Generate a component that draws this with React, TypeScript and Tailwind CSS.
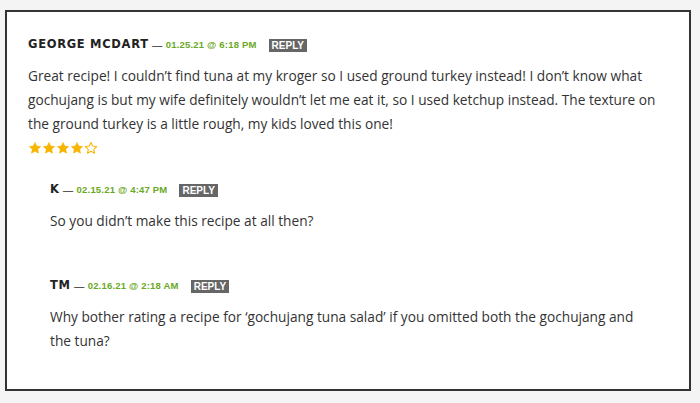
const comments = [
  {
    name: 'GEORGE MCDART',
    date: '01.25.21 @ 6:18 PM',
    text: 'Great recipe! I couldn’t find tuna at my kroger so I used ground turkey instead! I don’t know what gochujang is but my wife definitely wouldn’t let me eat it, so I used ketchup instead. The texture on the ground turkey is a little rough, my kids loved this one!',
    rating: 4,
    reply: false,
  },
  {
    name: 'K',
    date: '02.15.21 @ 4:47 PM',
    text: 'So you didn’t make this recipe at all then?',
    rating: 0,
    reply: true,
  },
  {
    name: 'TM',
    date: '02.16.21 @ 2:18 AM',
    text: 'Why bother rating a recipe for ‘gochujang tuna salad’ if you omitted both the gochujang and the tuna?',
    rating: 0,
    reply: true,
  },
];

function Star({ filled }: { filled: boolean }) {
  return (
    <svg width="14" height="14" viewBox="0 0 24 24">
      <path
        d="M12 2.5l2.9 6.2 6.8.8-5 4.7 1.3 6.7L12 17.6l-6 3.3 1.3-6.7-5-4.7 6.8-.8z"
        fill={filled ? '#f7b500' : 'none'}
        stroke="#f7b500"
        strokeWidth={filled ? 1 : 1.8}
        strokeLinejoin="round"
      />
    </svg>
  );
}

export default function App() {
  return (
    <div className="w-[700px] h-[403px] bg-[#f4f4f4] pt-[10px] pl-[5px] pr-[9px] pb-[12px]">
      <div className="h-full bg-white border-2 border-[#333] px-[21px] pt-[24px] font-['Open_Sans',sans-serif]">
        {comments.map((c, i) => (
          <div key={i} className={c.reply ? 'pl-[22px] pr-[15px] mt-[26px]' : ''}>
            <div className="flex items-center h-[18px]">
              <span className="font-['DejaVu_Sans',sans-serif] font-bold text-[11.5px] tracking-[0.06em] text-[#222]">
                {c.name}
              </span>
              <span className="text-[#555] text-[11px] leading-[11px] mx-[3px] -mt-[2px]">—</span>
              <span className="font-['Liberation_Sans',sans-serif] font-bold text-[9.5px] text-[#6aa924] tracking-[0.02em]">
                {c.date}
              </span>
              <span className="ml-[12px] bg-[#666] text-white font-['Liberation_Sans',sans-serif] font-bold text-[10px] leading-[13px] px-[3px]">
                REPLY
              </span>
            </div>
            <p className="mt-[10px] text-[13.7px] leading-[24px] text-[#333] pr-[10px]">{c.text}</p>
            {c.rating > 0 && (
              <div className="flex mt-[5px]">
                {[0, 1, 2, 3, 4].map((n) => (
                  <Star key={n} filled={n < c.rating} />
                ))}
              </div>
            )}
            {c.reply && i === 1 && <div className="h-[18px]" />}
          </div>
        ))}
      </div>
    </div>
  );
}
